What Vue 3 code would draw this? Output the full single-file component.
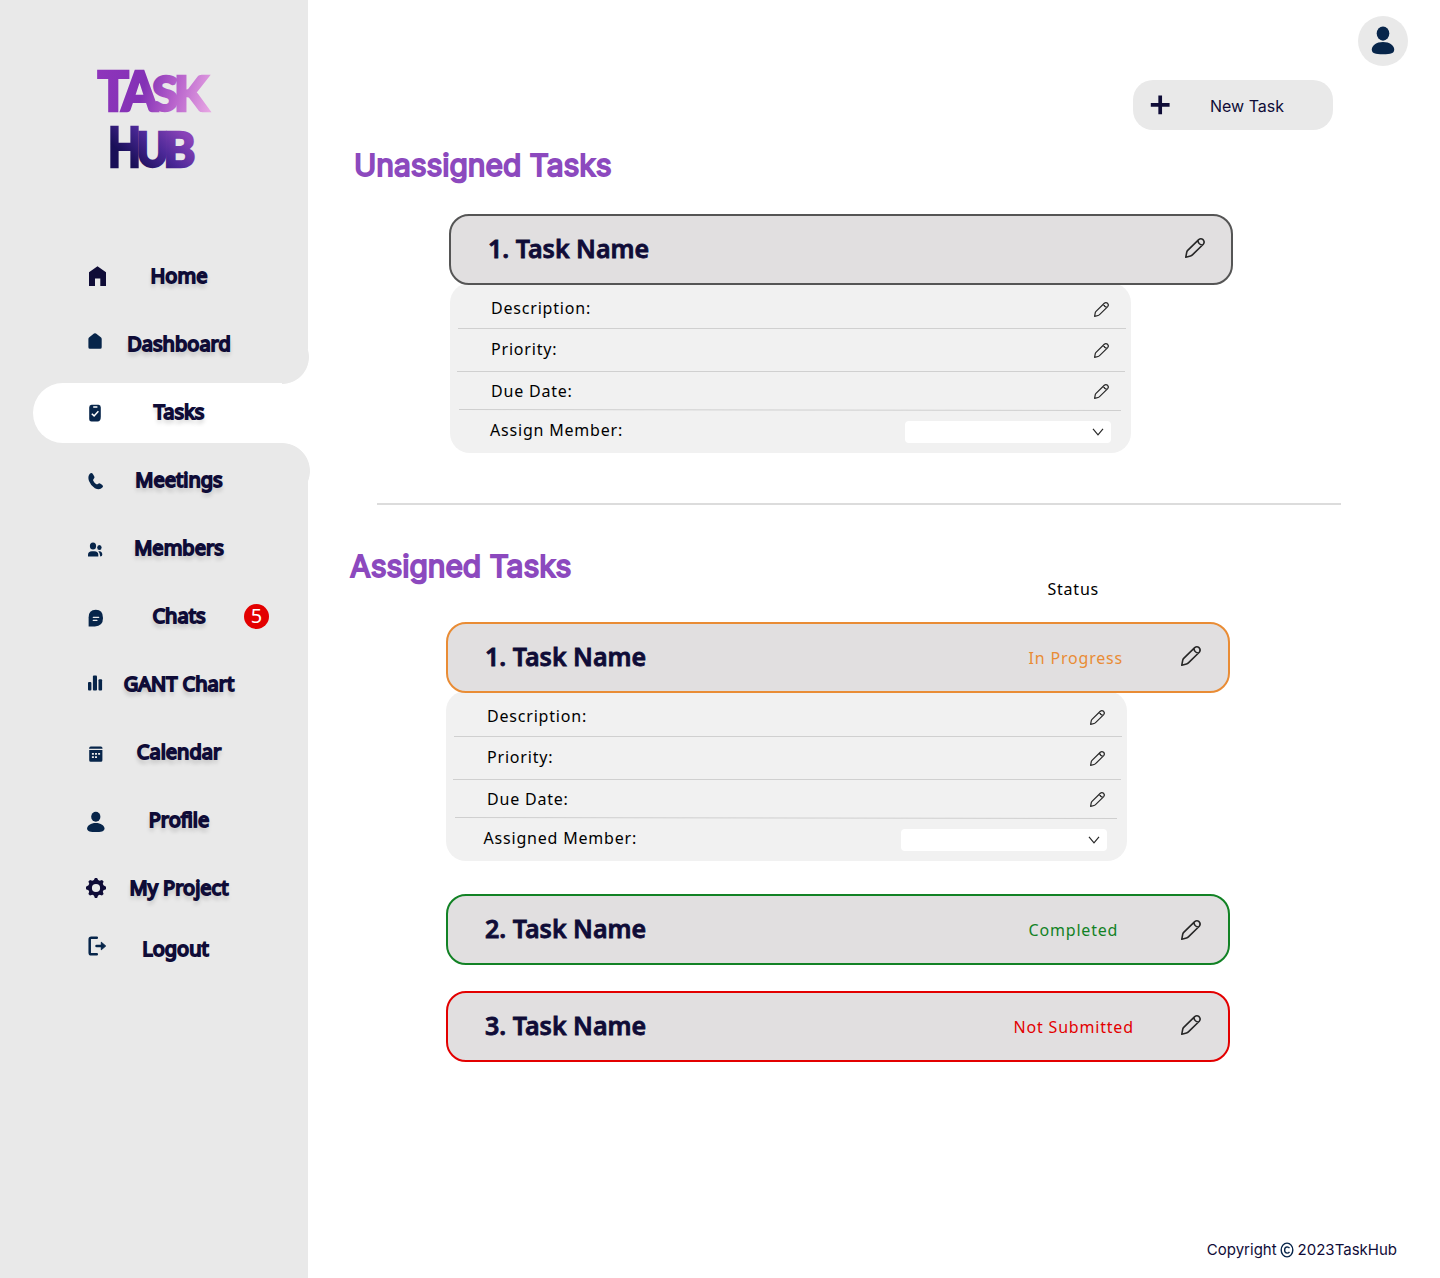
<script setup>
const nav = [
  { label: 'Home', icon: 'home' },
  { label: 'Dashboard', icon: 'dashboard' },
  { label: 'Tasks', icon: 'tasks', active: true },
  { label: 'Meetings', icon: 'phone' },
  { label: 'Members', icon: 'members' },
  { label: 'Chats', icon: 'chat', badge: 5 },
  { label: 'GANT Chart', icon: 'chart' },
  { label: 'Calendar', icon: 'calendar' },
  { label: 'Profile', icon: 'profile' },
  { label: 'My Project', icon: 'gear' },
  { label: 'Logout', icon: 'logout', last: true },
]

const icons = {
  home: '<path fill="#0f0c37" d="M15.5 5.2 24 11.3V25h-5.7v-7.4H13V25H7V11.3z"/>',
  dashboard: '<path d="M12 4.6q1-.9 2 0l4.8 3.7q.9.7.9 1.8v8.2q0 1.5-1.5 1.5H7.9q-1.5 0-1.5-1.5v-8.2q0-1.1.9-1.8z"/>',
  tasks: '<path d="M9.500 7.800h7q2.300.4 2.300 2.600v9.400q0 4.700-3.200 4.700H9.500q-2.300 0-2.300-2.300V10.400q0-2.200 2.300-2.600z"/><path stroke="#fff" stroke-width="1.500" fill="none" d="M11.200 9.900h4.200M9.800 16.700l2.300 2.200 4.300-4.600"/>',
  phone: '<path d="M7.600 8.900Q9.700 7 11 9.200l1.300 2.200q.7 1.400-.7 2.500-1 .9-.2 2.100 1 1.900 2.600 3 1 .6 1.900-.1 1.300-1 2.600-.2l1.800 1.200q1.500 1.200.1 2.700-2.900 3.200-7.500.6Q8.700 20.600 7 16q-1.500-4.600.6-7.100z"/>',
  members: '<ellipse cx="11" cy="13" rx="3.100" ry="3.600"/><ellipse cx="17.400" cy="14.500" rx="2.200" ry="2.500"/><path d="M6 23.600v-1.800q0-3.600 4-3.600h2.300q4 0 4 3.600v1.800zM16.300 18.200h1.100q2.900 0 2.900 3.600 0 1.700-2 1.700 0-3.500-2-5.300z"/>',
  chat: '<path d="M6.600 25.400v-9q0-7.600 7.200-7.600t7.200 8.200-8.200 8.400z"/><path stroke="#e9e9e9" stroke-width="1.300" stroke-linecap="round" d="M11.300 16.300h5.400M11.300 19.400h3.600"/>',
  chart: '<rect x="6" y="13" width="3.400" height="8.500" rx="1"/><rect x="10.900" y="6.500" width="4.100" height="15" rx="1"/><rect x="16.500" y="10.300" width="3.600" height="11.200" rx="1"/>',
  calendar: '<path d="M7 11.700q.2-2.200 1.800-2.200h10q1.700 0 1.800 2.200zM7.200 13h13.200v10.200q0 1.500-1.500 1.500H8.700q-1.500 0-1.500-1.500z"/><path stroke="#e9e9e9" stroke-width="1.700" stroke-dasharray="2 1.100" d="M9.900 16.900h8.200M9.900 20.200h5.100"/>',
  profile: '<ellipse cx="13.800" cy="11.800" rx="4.600" ry="5"/><path d="M13.800 18c5 0 8.700 2.500 8.700 5.600s-3.700 3.500-8.700 3.500-8.700-.4-8.700-3.500S8.800 18 13.800 18z"/>',
  gear: '<path fill="#0f0c37" fill-rule="evenodd" d="M11.900 7l1-2h2.200l1 2 1.600.7 2.300-.8 1.600 1.600-.8 2.300.7 1.500 2.500 1.400v2.500l-2.500 1-.7 1.600.8 2.200-1.600 1.600-2.300-.8-1.600.7-1 2.500h-2.200l-1-2.500-1.600-.7-2.300.8-1.600-1.600.8-2.200-.7-1.600L4 16.200v-2.500l2.500-1.400.7-1.500L6.400 8.500 8 6.900l2.300.8zM14 10.900a4.100 4.100 0 1 0 0 8.200 4.100 4.100 0 1 0 0-8.200z"/>',
  logout: '<path fill="none" stroke="#07254a" stroke-width="2.500" stroke-linecap="round" stroke-linejoin="round" d="M14.800 3.700H9.300q-1.600 0-1.600 1.600v13.400q0 1.600 1.600 1.600h5.500M14.500 12h6"/><path stroke="#07254a" stroke-width="1" stroke-linejoin="round" d="M19.300 8.200v7.600l4.400-3.800z"/>',
}

const sections = [
  {
    key: 'open',
    title: 'Unassigned Tasks',
    tasks: [{ name: '1. Task Name', tone: 'gray', details: 'Assign Member:' }],
  },
  {
    key: 'assigned',
    title: 'Assigned Tasks',
    column: 'Status',
    tasks: [
      { name: '1. Task Name', tone: 'orange', status: 'In Progress', details: 'Assigned Member:' },
      { name: '2. Task Name', tone: 'green', status: 'Completed' },
      { name: '3. Task Name', tone: 'red', status: 'Not Submitted' },
    ],
  },
]
const pencil = 'M.8 19.200 1.700 14.300Q1.900 13.200 2.700 12.400L13.700 1.600Q15.900-.200 18.100 1.700 20.100 3.900 18.300 6.200L7.400 16.900Q6.600 17.700 5.500 18zM12.900 2.500q.5 4 4.500 4.600'
</script>

<template>
  <div class="page">
    <aside class="sidebar">
      <svg class="logo" viewBox="0 0 130 110" aria-label="Task Hub">
        <defs>
          <linearGradient id="top" gradientUnits="userSpaceOnUse" x1="7" y1="20" x2="120" y2="50">
            <stop offset="0" stop-color="#8e35bb" />
            <stop offset=".4" stop-color="#8331b5" />
            <stop offset=".68" stop-color="#b863cc" />
            <stop offset="1" stop-color="#e7a6e3" />
          </linearGradient>
          <linearGradient id="low" gradientUnits="userSpaceOnUse" x1="88" y1="66" x2="48" y2="108">
            <stop offset="0" stop-color="#8a43b8" />
            <stop offset=".5" stop-color="#4b2897" />
            <stop offset="1" stop-color="#190f58" />
          </linearGradient>
        </defs>
        <text class="logo-text" fill="url(#top)" stroke="url(#top)" y="50"><tspan x="7.500" font-size="55" textLength="31.500" lengthAdjust="spacingAndGlyphs">T</tspan><tspan x="31.500" font-size="55" textLength="36" lengthAdjust="spacingAndGlyphs">A</tspan><tspan x="62" font-size="48">S</tspan><tspan x="84" font-size="48" textLength="34.500" lengthAdjust="spacingAndGlyphs">K</tspan></text>
        <text class="logo-text" fill="url(#low)" stroke="url(#low)" y="106"><tspan x="18" font-size="55" textLength="33" lengthAdjust="spacingAndGlyphs">H</tspan><tspan x="46.500" font-size="48" textLength="32" lengthAdjust="spacingAndGlyphs">U</tspan><tspan x="73.500" font-size="48">B</tspan></text>
      </svg>
      <nav>
        <div
          v-for="n in nav"
          :key="n.label"
          class="nav-row"
          :class="{ active: n.active, last: n.last }"
        >
          <svg class="nav-icon" viewBox="0 0 30 30" v-html="icons[n.icon]" />
          <span class="nav-label">{{ n.label }}</span>
          <span v-if="n.badge" class="badge">{{ n.badge }}</span>
        </div>
      </nav>
    </aside>

    <main>
      <header>
        <div class="avatar">
          <svg viewBox="0 0 50 50">
            <ellipse cx="25" cy="17.600" rx="6.300" ry="7.100" />
            <path d="M25 26c6.600 0 11.200 3.600 11.200 7.500S33 38.300 25 38.300s-11.200-.9-11.200-4.800S18.400 26 25 26z" />
          </svg>
        </div>
        <button class="new-task">
          <svg viewBox="0 0 20 20"><path d="M.800 9.800h18.800M10.200.500v18.800" /></svg>
          <span>New Task</span>
        </button>
      </header>

      <section v-for="s in sections" :key="s.key" :class="s.key">
        <div class="section-head">
          <h2>{{ s.title }}</h2>
          <span v-if="s.column" class="column">{{ s.column }}</span>
        </div>
        <article v-for="t in s.tasks" :key="t.name" class="task">
          <div class="card" :class="t.tone">
            <h3>{{ t.name }}</h3>
            <span class="status">{{ t.status }}</span>
            <svg class="pencil" viewBox="0 0 20 20"><path :d="pencil" /></svg>
          </div>
          <div v-if="t.details" class="details">
            <div class="field desc">
              <span>Description:</span>
              <svg class="pencil" viewBox="0 0 20 20"><path :d="pencil" /></svg>
            </div>
            <div class="field prio">
              <span>Priority:</span>
              <svg class="pencil" viewBox="0 0 20 20"><path :d="pencil" /></svg>
            </div>
            <div class="field due">
              <span>Due Date:</span>
              <svg class="pencil" viewBox="0 0 20 20"><path :d="pencil" /></svg>
            </div>
            <svg class="slant" viewBox="0 0 662 2"><path d="M0 .5 662 1.500" /></svg>
            <div class="field member">
              <span>{{ t.details }}</span>
              <div class="select">
                <svg viewBox="0 0 12 8"><path d="M1 .8 6 6.800 11 .8" /></svg>
              </div>
            </div>
          </div>
        </article>
      </section>

      <footer>
        <span>Copyright</span>
        <svg viewBox="0 0 14 16">
          <ellipse cx="7" cy="8" rx="5.800" ry="6.900" />
          <path d="M9.500 6.200Q8.600 4.900 7.200 4.900 4.600 5 4.600 8t2.600 3.100q1.400 0 2.300-1.300" />
        </svg>
        <span>2023TaskHub</span>
      </footer>
    </main>
  </div>
</template>

<style>
body {
  background: #fff;
}
</style>

<style scoped>
.page {
  display: flex;
  width: 1440px;
  height: 1278px;
  overflow: hidden;
  font-family: "Noto Sans", sans-serif;
  color: #000;
}
.sidebar {
  width: 308px;
  flex: none;
  background: #e9e9e9;
}
.logo {
  display: block;
  width: 130px;
  height: 110px;
  margin: 61px 0 71px 90px;
}
.logo-text {
  font-family: Lato, sans-serif;
  font-weight: 900;
  stroke-width: 2.400px;
}
.nav-row {
  position: relative;
  display: flex;
  align-items: center;
  height: 60px;
  margin: 0 0 8px 33px;
  padding-left: 49px;
}
nav {
  padding-top: 5px;
}
.nav-row.last {
  height: 30px;
  margin-top: 16px;
}
.active {
  width: 240px;
  background: #fff;
  border-radius: 30px 0 0 30px;
}
.active::before,
.active::after {
  content: "";
  position: absolute;
}
.active::before {
  left: 249px;
  top: -34px;
  width: 27px;
  height: 35px;
  background: radial-gradient(circle at 0 8px, #e9e9e9 26.500px, #fff 27.300px);
}
.active::after {
  left: 249px;
  top: 60px;
  width: 28px;
  height: 38px;
  background: radial-gradient(circle at 0 28px, #e9e9e9 27.500px, #fff 28.300px);
}
.nav-icon {
  width: 30px;
  height: 30px;
  margin-bottom: 2px;
  fill: #07254a;
}
.nav-label {
  width: 134px;
  margin-bottom: 4px;
  text-align: center;
  white-space: nowrap;
  font-size: 20px;
  line-height: 27px;
  color: #0f0c37;
  -webkit-text-stroke: 1.800px #0f0c37;
  text-shadow: 0 4px 4px rgba(0, 0, 0, 0.25);
}
.last .nav-label {
  width: 127px;
  text-shadow: none;
}
.badge {
  width: 25px;
  height: 25px;
  margin: 0 0 2px -2px;
  border-radius: 50%;
  background: #e30000;
  color: #fff;
  font-size: 20px;
  line-height: 24px;
  text-align: center;
}
main {
  flex: 1;
  display: flex;
  flex-direction: column;
}
header {
  height: 130px;
  display: flex;
  flex-direction: column;
  align-items: flex-end;
}
.avatar {
  width: 50px;
  height: 50px;
  margin: 16px 32px 14px 0;
  border-radius: 50%;
  background: #e9e9e9;
  fill: #07254a;
}
.new-task {
  display: flex;
  align-items: center;
  width: 200px;
  height: 50px;
  margin-right: 107px;
  padding: 0 0 0 17px;
  border: 0;
  border-radius: 20px;
  background: #e9e9e9;
  font: 16px/20px Inter, sans-serif;
  color: #0f0c37;
}
.new-task svg {
  width: 20px;
  height: 20px;
  margin-right: 40px;
  stroke: #0f0c37;
  stroke-width: 3.700px;
}
.new-task span {
  padding-top: 2px;
}
h2,
h3 {
  margin: 0;
  white-space: nowrap;
}
.section-head {
  display: flex;
}
h2 {
  font: 400 30px/39px Inter, sans-serif;
  letter-spacing: -0.060px;
  color: #8c49be;
  -webkit-text-stroke: 1.800px #8c49be;
}
.open {
  box-sizing: border-box;
  height: 373px;
  margin-left: 46px;
  padding-top: 16px;
}
.open .section-head {
  height: 68px;
}
.open .task {
  margin-left: 95px;
}
.assigned {
  margin-left: 42px;
}
.assigned::before {
  content: "";
  display: block;
  width: 964px;
  height: 2px;
  margin: 0 0 42px 27px;
  background: #dcdcdc;
}
.assigned .section-head {
  height: 75px;
}
.column {
  width: 100px;
  margin: 31px 0 0 476px;
  font-size: 16px;
  line-height: 22px;
  letter-spacing: 0.800px;
}
.assigned .task {
  margin-left: 96px;
}
.task {
  margin-bottom: 26px;
}
.task:has(.details) {
  margin-bottom: 33px;
}
.card {
  position: relative;
  z-index: 1;
  box-sizing: border-box;
  display: flex;
  align-items: center;
  width: 784px;
  height: 71px;
  padding-left: 37px;
  border: 2px solid #555;
  border-radius: 20px;
  background: #e1dfe0;
}
.card h3 {
  width: 543px;
  padding-bottom: 3px;
  font-size: 25px;
  font-weight: 600;
  line-height: 34px;
  color: #0f0c37;
  -webkit-text-stroke: 0.800px #0f0c37;
}
.status {
  width: 149px;
  padding: 0 0 0 0.600px;
  font-size: 16px;
  line-height: 22px;
  letter-spacing: 0.800px;
  white-space: nowrap;
}
.orange { border-color: #e98c35; }
.green { border-color: #128225; }
.red { border-color: #e30000; }
.orange .status { color: #e98c35; }
.green .status { color: #128225; }
.red .status { color: #e30000; margin-left: -15px; width: 164px; }
.pencil {
  flex: none;
  overflow: visible;
  fill: none;
  stroke: #272727;
  stroke-width: 1.600px;
  stroke-linejoin: round;
}
.card .pencil {
  width: 20px;
  height: 20px;
  margin: 0 0 3px 3.400px;
}
.gray .pencil {
  margin-left: 4.400px;
}
.green .pencil {
  margin-bottom: 0;
}
.field .pencil {
  width: 15px;
  height: 15px;
}
.details {
  width: 681px;
  height: 170px;
  margin-top: -2px;
  border-radius: 20px;
  background: #f1f1f1;
}
.open .details {
  margin-left: 1px;
}
.field {
  box-sizing: border-box;
  display: flex;
  align-items: center;
  justify-content: space-between;
  font-size: 16px;
  line-height: 22px;
  letter-spacing: 0.800px;
}
.field span {
  margin-bottom: 2px;
}
.desc {
  height: 46px;
  margin: 0 5px 0 8px;
  padding: 8px 17px 0 33px;
  border-bottom: 1px solid #d0d0d0;
}
.desc span {
  margin-bottom: 3px;
}
.prio {
  height: 43px;
  margin: 0 6px 0 7px;
  padding: 0 16px 0 34px;
  border-bottom: 1px solid #d0d0d0;
}
.due {
  height: 37px;
  padding: 2px 22px 0 41px;
}
.slant {
  display: block;
  width: 662px;
  height: 2px;
  margin-left: 9px;
  stroke: #cfcfcf;
}
.member {
  height: 40px;
  padding: 0 20px 0 40px;
}
.assigned .member {
  padding-left: 37.500px;
}
.select {
  display: flex;
  align-items: center;
  justify-content: flex-end;
  box-sizing: border-box;
  width: 206px;
  height: 22px;
  margin-top: 2px;
  padding-right: 7px;
  border-radius: 4px;
  background: #fff;
}
.select svg {
  width: 12px;
  height: 8px;
  fill: none;
  stroke: #272727;
  stroke-width: 1.200px;
}
footer {
  display: flex;
  align-items: center;
  margin: auto 43px 19px auto;
  font: 15px/19px Inter, sans-serif;
  color: #0f0c37;
}
footer svg {
  width: 14px;
  height: 16px;
  margin: 0 4px 0 3px;
  fill: none;
  stroke: #07254a;
  stroke-width: 1.400px;
}
</style>
